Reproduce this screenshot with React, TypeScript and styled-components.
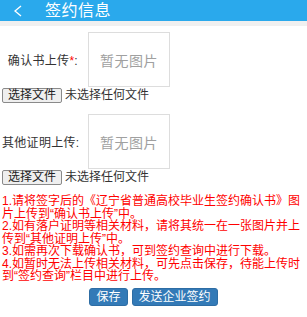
import React from 'react';
import styled, { createGlobalStyle } from 'styled-components';

const GlobalStyle = createGlobalStyle`
  html, body {
    margin: 0;
    padding: 0;
    background: #fff;
  }
  body {
    font-family: 'Liberation Sans', 'Noto Sans CJK SC', sans-serif;
  }
`;

const Page = styled.div`
  width: 307px;
  min-height: 317px;
  background: #fff;
`;

const Header = styled.header`
  height: 21px;
  background: #2aa9ec;
  display: flex;
  align-items: center;
  color: #fff;
`;

const BackIcon = styled.svg`
  width: 10px;
  height: 12px;
  margin-left: 13px;
`;

const Title = styled.h1`
  margin: 0 0 0 22px;
  font-size: 16px;
  font-weight: normal;
  letter-spacing: 0.5px;
  line-height: 21px;
`;

const Band = styled.div`
  height: 5px;
  background: #f0f0f0;
`;

const Form = styled.div`
  padding: 6px 2px 0 2px;
`;

const Field = styled.div<{ $gap?: number }>`
  margin-top: ${(p) => p.$gap ?? 0}px;
`;

const UploadRow = styled.div`
  display: flex;
  align-items: center;
  gap: 10px;
`;

const Label = styled.label`
  width: 76px;
  text-align: right;
  font-size: 12px;
  color: #333;
  white-space: nowrap;
  letter-spacing: 0.3px;
`;

const Star = styled.span`
  color: #f00;
`;

const Preview = styled.div`
  width: 80px;
  height: 53px;
  border: 1px solid #ddd;
  display: flex;
  align-items: center;
  justify-content: center;
  font-size: 14px;
  color: #a0a0a0;
  letter-spacing: 0.5px;
`;

const FileRow = styled.div`
  display: flex;
  align-items: center;
  gap: 3px;
  height: 15px;
  margin-top: 1px;
`;

const FileButton = styled.button`
  font-family: inherit;
  font-size: 12px;
  line-height: 13px;
  height: 15px;
  padding: 0 5px;
  color: #222;
  background: #efefef;
  border: 1px solid #8a8a8a;
  border-radius: 2px;
`;

const FileText = styled.span`
  font-size: 12px;
  line-height: 15px;
  color: #333;
`;

const Notes = styled.div`
  margin-top: 10px;
  font-size: 12px;
  line-height: 12.5px;
  color: #f00;
`;

const Note = styled.p`
  margin: 0;
`;

const Actions = styled.div`
  display: flex;
  justify-content: center;
  gap: 4px;
  margin-top: 5px;
`;

const ActionButton = styled.button`
  font-family: inherit;
  font-size: 12px;
  line-height: 14px;
  padding: 1px 6px;
  color: #fff;
  background: #337ab7;
  border: 1px solid #2e6da4;
  border-radius: 3px;
`;

const notes = [
  '1.请将签字后的《辽宁省普通高校毕业生签约确认书》图片上传到“确认书上传”中。',
  '2.如有落户证明等相关材料，请将其统一在一张图片并上传到“其他证明上传”中。',
  '3.如需再次下载确认书，可到签约查询中进行下载。',
  '4.如暂时无法上传相关材料，可先点击保存，待能上传时到“签约查询”栏目中进行上传。',
];

const Upload: React.FC<{ label: React.ReactNode; gap?: number }> = ({ label, gap }) => (
  <Field $gap={gap}>
    <UploadRow>
      <Label>{label}</Label>
      <Preview>暂无图片</Preview>
    </UploadRow>
    <FileRow>
      <FileButton>选择文件</FileButton>
      <FileText>未选择任何文件</FileText>
    </FileRow>
  </Field>
);

const App: React.FC = () => {
  return (
    <Page>
      <GlobalStyle />
      <Header>
        <BackIcon viewBox="0 0 10 12">
          <path d="M8 1 L2 6 L8 11" fill="none" stroke="#fff" strokeWidth="1.3" />
        </BackIcon>
        <Title>签约信息</Title>
      </Header>
      <Band />
      <Form>
        <Upload
          label={
            <>
              确认书上传<Star>*</Star>:
            </>
          }
        />
        <Upload label="其他证明上传:" gap={11} />
        <Notes>
          {notes.map((n) => (
            <Note key={n}>{n}</Note>
          ))}
        </Notes>
        <Actions>
          <ActionButton>保存</ActionButton>
          <ActionButton>发送企业签约</ActionButton>
        </Actions>
      </Form>
    </Page>
  );
};

export default App;
